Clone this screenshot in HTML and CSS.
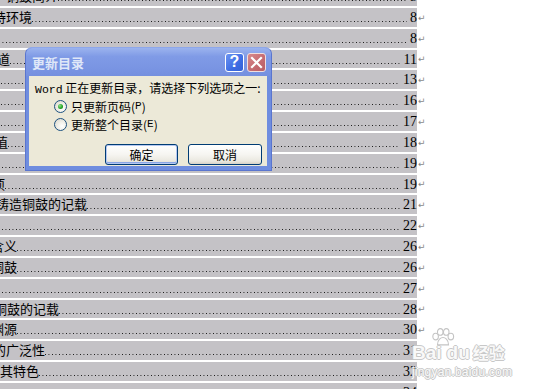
FILE: index.html
```html
<!DOCTYPE html>
<html>
	<head>
		<meta charset="utf-8">
		<title>更新目录</title>
		<link rel="stylesheet" href="styles.css">
	</head>
	<body>
		<div id="page">
			<ul class="toc">
				<li class="row"><div class="line"><span class="title" style="margin-left:-20px">一、铜鼓简介</span><span class="leader"></span><span class="num">5</span></div><span class="mark">↵</span></li>
				<li class="row"><div class="line"><span class="title" style="margin-left:-20px">支持环境</span><span class="leader"></span><span class="num">8</span></div><span class="mark">↵</span></li>
				<li class="row"><div class="line"><span class="title" style="margin-left:-60px">一、概述</span><span class="leader"></span><span class="num">8</span></div><span class="mark">↵</span></li>
				<li class="row"><div class="line"><span class="title" style="margin-left:-81px">铜鼓的源流通道</span><span class="leader"></span><span class="num">11</span></div><span class="mark">↵</span></li>
				<li class="row"><div class="line"><span class="title" style="margin-left:-78px">铜鼓的分布</span><span class="leader"></span><span class="num">13</span></div><span class="mark">↵</span></li>
				<li class="row"><div class="line"><span class="title" style="margin-left:-78px">铜鼓的分类</span><span class="leader"></span><span class="num">16</span></div><span class="mark">↵</span></li>
				<li class="row"><div class="line"><span class="title" style="margin-left:-78px">铜鼓的形制</span><span class="leader"></span><span class="num">17</span></div><span class="mark">↵</span></li>
				<li class="row"><div class="line"><span class="title" style="margin-left:-83px">铜鼓的艺术价值</span><span class="leader"></span><span class="num">18</span></div><span class="mark">↵</span></li>
				<li class="row"><div class="line"><span class="title" style="margin-left:-70px">铜鼓的用途</span><span class="leader"></span><span class="num">19</span></div><span class="mark">↵</span></li>
				<li class="row"><div class="line"><span class="title" style="margin-left:-86px">铜鼓的主要事项</span><span class="leader"></span><span class="num">19</span></div><span class="mark">↵</span></li>
				<li class="row"><div class="line"><span class="title" style="margin-left:-69px">古籍中有关铸造铜鼓的记载</span><span class="leader"></span><span class="num">21</span></div><span class="mark">↵</span></li>
				<li class="row"><div class="line"><span class="title" style="margin-left:-83px">三、铜鼓文化</span><span class="leader"></span><span class="num">22</span></div><span class="mark">↵</span></li>
				<li class="row"><div class="line"><span class="title" style="margin-left:-74px">铜鼓纹饰的含义</span><span class="leader"></span><span class="num">26</span></div><span class="mark">↵</span></li>
				<li class="row"><div class="line"><span class="title" style="margin-left:-74px">各地出土的铜鼓</span><span class="leader"></span><span class="num">26</span></div><span class="mark">↵</span></li>
				<li class="row"><div class="line"><span class="title" style="margin-left:-96px">四、铜鼓的传承</span><span class="leader"></span><span class="num">27</span></div><span class="mark">↵</span></li>
				<li class="row"><div class="line"><span class="title" style="margin-left:-71px">史书中关于铜鼓的记载</span><span class="leader"></span><span class="num">28</span></div><span class="mark">↵</span></li>
				<li class="row"><div class="line"><span class="title" style="margin-left:-74px">铜鼓文化的渊源</span><span class="leader"></span><span class="num">30</span></div><span class="mark">↵</span></li>
				<li class="row"><div class="line"><span class="title" style="margin-left:-59px">铜鼓文化的广泛性</span><span class="leader"></span><span class="num">31</span></div><span class="mark">↵</span></li>
				<li class="row"><div class="line"><span class="title" style="margin-left:-65px">铜鼓文化及其特色</span><span class="leader"></span><span class="num">32</span></div><span class="mark">↵</span></li>
				<li class="row"><div class="line"><span class="title" style="margin-left:-60px">五、结语</span><span class="leader"></span><span class="num">34</span></div><span class="mark">↵</span></li>
			</ul>

			<!-- 更新目录 对话框 -->
			<div class="dialog">
				<div class="caption">
					<span class="caption-text">更新目录</span>
					<span class="cap-btn help">?</span>
					<span class="cap-btn close">
						<svg width="13" height="13" viewBox="0 0 13 13"><path d="M2 2 L11 11 M11 2 L2 11" stroke="#fff" stroke-width="2.2" stroke-linecap="square"/></svg>
					</span>
				</div>
				<div class="client">
					<div class="prompt"><span class="latin">Word</span> 正在更新目录，请选择下列选项之一:</div>
					<label class="option"><span class="radio checked"></span>只更新页码(<u>P</u>)</label>
					<label class="option"><span class="radio"></span>更新整个目录(<u>E</u>)</label>
					<div class="buttons">
						<button type="button" class="btn default">确定</button>
						<button type="button" class="btn">取消</button>
					</div>
				</div>
			</div>

			<!-- 水印 -->
			<div class="watermark">
				<svg class="paw" width="24" height="19" viewBox="0 0 26 20">
					<ellipse cx="5" cy="9" rx="3" ry="3.6" />
					<ellipse cx="10" cy="4" rx="3" ry="3.6" />
					<ellipse cx="16.5" cy="4" rx="3" ry="3.6" />
					<ellipse cx="21.5" cy="9" rx="3" ry="3.6" />
					<path d="M7 18 C7 12 11 10 13 10 C15 10 19 12 19 18 Z" />
				</svg>
				<div class="brand"><span>Bai</span><span class="du">du</span><span class="jy">经验</span></div>
				<div class="site">jingyan.baidu.com</div>
			</div>
		</div>
	</body>
</html>
```

FILE: styles.css
```css
body {
	margin: 0;
	background: #fff;
	overflow: hidden;
}
#page {
	position: relative;
	width: 536px;
	height: 389px;
	overflow: hidden;
}
.toc {
	list-style: none;
	margin: -12.83px 0 0 0;
	padding: 0;
	font-family: "Noto Sans CJK SC", sans-serif;
	font-size: 13px;
	color: #000;
}
.row {
	display: flex;
	align-items: flex-end;
	height: 20.83px;
}
.line {
	width: 417px;
	height: 20.83px;
	box-sizing: border-box;
	background: #c4c2c6;
	border-bottom: 2px solid #fff;
	display: flex;
	align-items: baseline;
	line-height: 18.83px;
	overflow: hidden;
}
.title {
	white-space: nowrap;
	flex: none;
}
.leader {
	flex: 1;
	display: inline-block;
	height: 1px;
	margin-bottom: -1px;
	background: linear-gradient(to right, #111 1px, transparent 1px) repeat-x;
	background-size: 3.5px 1px;
}
.num {
	font-family: "Liberation Serif", serif;
	font-size: 14px;
	padding-left: 3px;
}
.mark {
	font-family: "DejaVu Sans", sans-serif;
	font-size: 9px;
	color: #8a8a8a;
	line-height: 12px;
	padding: 0 0 5px 1px;
}

/* 对话框 */
.dialog {
	position: absolute;
	left: 25px;
	top: 47px;
	width: 247px;
	height: 124px;
	box-sizing: border-box;
	padding: 0 4px 4px 3px;
	border-radius: 7px 7px 0 0;
	background: #6f8ddf;
	border: 1px solid #5a75cf;
	border-top-color: #8ea7ea;
	display: flex;
	flex-direction: column;
}
.caption {
	height: 28px;
	display: flex;
	align-items: center;
	background: linear-gradient(#9bb3ee, #809be6 30%, #7893e2 80%, #7590df);
	margin: 0 -4px 0 -3px;
	padding: 0 5px 0 6px;
	border-radius: 6px 6px 0 0;
}
.caption-text {
	flex: 1;
	font-family: "Noto Sans CJK SC", sans-serif;
	font-weight: bold;
	font-size: 13px;
	color: #dfe7f8;
	padding-top: 1px;
}
.cap-btn {
	width: 19px;
	height: 19px;
	box-sizing: border-box;
	border: 1px solid #fff;
	border-radius: 3px;
	display: flex;
	align-items: center;
	justify-content: center;
	margin-left: 3px;
}
.help {
	background: linear-gradient(135deg, #6c94f2, #3d6de3 60%, #3561d6);
	color: #fff;
	font-family: "Liberation Sans", sans-serif;
	font-weight: bold;
	font-size: 16px;
}
.close {
	background: linear-gradient(135deg, #d88a8c, #c46a70 60%, #b85e64);
	border-color: #f0dede;
}
.client {
	flex: 1;
	background: #ece9d8;
	padding: 5px 0 0 6px;
	font-family: "Noto Sans CJK SC", sans-serif;
	font-size: 12px;
	color: #000;
}
.prompt {
	line-height: 14px;
	white-space: nowrap;
}
.latin {
	font-family: "Liberation Mono", monospace;
	font-size: 11.5px;
}
.option {
	display: flex;
	align-items: center;
	height: 18px;
	margin-left: 19px;
}
.option u {
	text-decoration: none;
	font-family: "Liberation Mono", monospace;
	font-size: 11px;
}
.radio {
	width: 13px;
	height: 13px;
	box-sizing: border-box;
	border: 1px solid #1c5180;
	border-radius: 50%;
	background: radial-gradient(circle at 65% 65%, #fff, #f2f1ea 40%, #d6d3c6);
	margin-right: 4px;
	display: flex;
	align-items: center;
	justify-content: center;
}
.radio.checked::after {
	content: "";
	width: 5px;
	height: 5px;
	border-radius: 50%;
	background: radial-gradient(circle at 35% 35%, #8ee08a, #21a121 60%, #1a861a);
}
.buttons {
	display: flex;
	gap: 10px;
	margin: 11px 0 0 70px;
}
.btn {
	width: 74px;
	height: 21px;
	border: 1px solid #003c74;
	border-radius: 3px;
	background: linear-gradient(#fff, #f6f5f1 50%, #eae8e0 85%, #d7d2c6);
	font-family: "Noto Sans CJK SC", sans-serif;
	font-size: 12px;
	color: #000;
	padding: 0;
	line-height: 17px;
}
.btn.default {
	width: 73px;
	box-shadow: inset 0 0 0 1px #b5c8f2, inset 0 -1px 0 1px #8aa6e6;
}

/* 百度经验水印 */
.watermark {
	position: absolute;
	left: 412px;
	top: 328px;
	width: 100px;
	color: rgba(255, 255, 255, .92);
	text-shadow: 1px 0 0 #c8c8c8, -1px 0 0 #c8c8c8, 0 1px 0 #c8c8c8, 0 -1px 0 #c8c8c8;
}
.paw {
	display: block;
	margin-left: 19px;
	fill: rgba(255, 255, 255, .85);
	stroke: #c4c4c4;
	stroke-width: 1.2;
}
.brand {
	font-family: "Liberation Sans", sans-serif;
	font-weight: bold;
	font-size: 19px;
	line-height: 17px;
	margin-top: -3px;
	white-space: nowrap;
}
.brand .du {
	margin-left: 5px;
}
.brand .jy {
	font-family: "Noto Sans CJK SC", sans-serif;
	font-size: 16px;
	margin-left: 3px;
}
.site {
	font-family: "Liberation Sans", sans-serif;
	font-size: 12px;
	margin-top: 4px;
	letter-spacing: .2px;
}
```
